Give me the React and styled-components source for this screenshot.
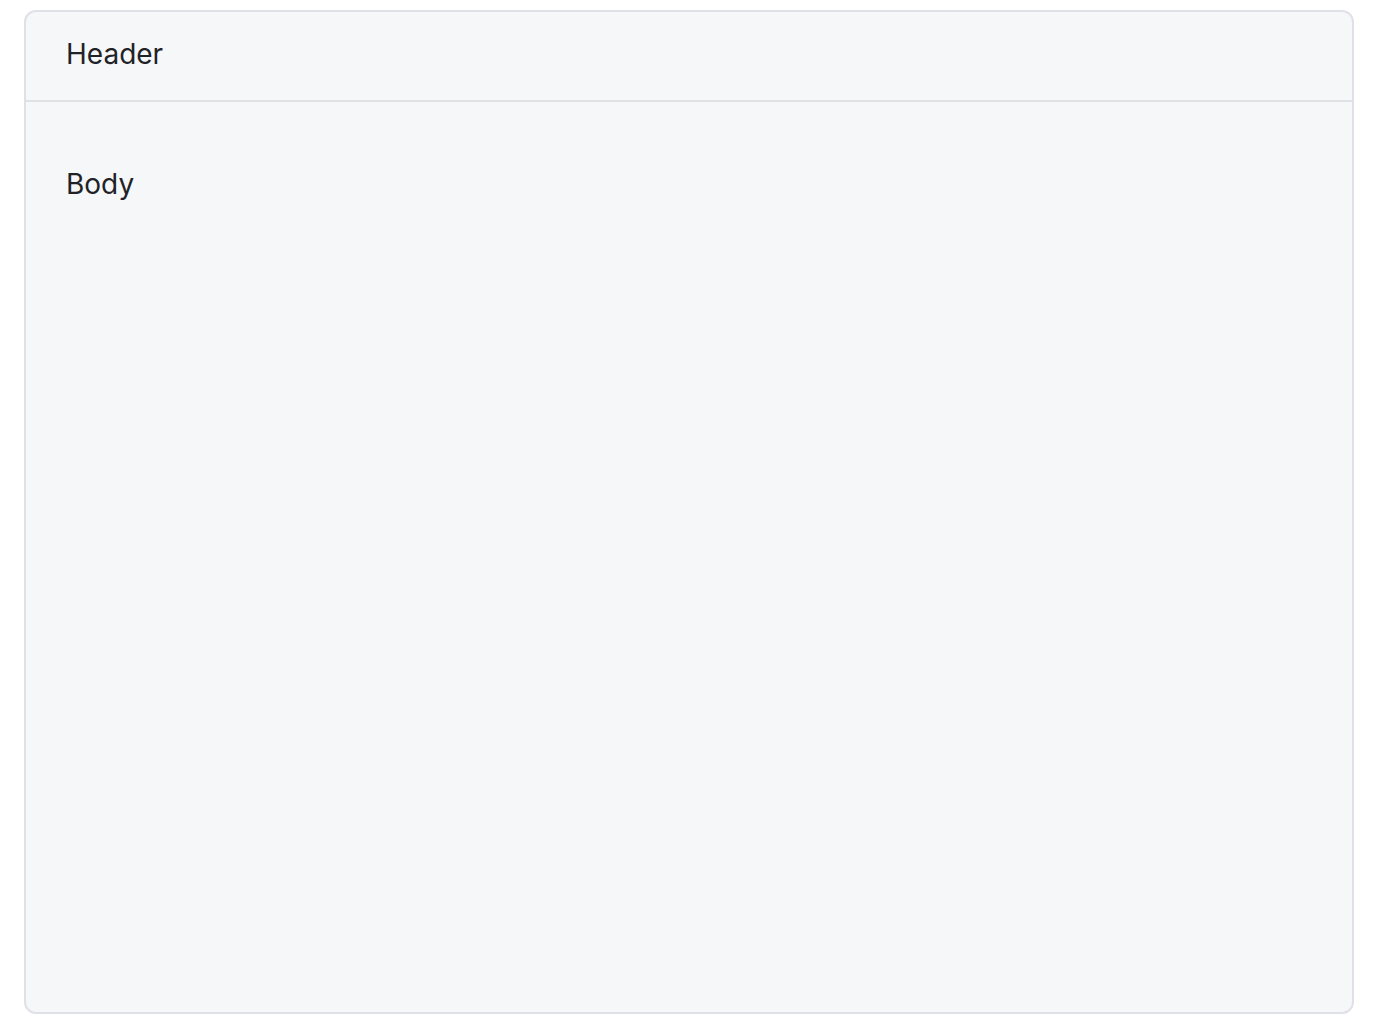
import styled, { createGlobalStyle } from "styled-components";

const GlobalStyle = createGlobalStyle`
    html,
    body {
        margin: 0;
        padding: 0;
        background: #ffffff;
    }

    body {
        font-family: Inter, "Noto Sans", "Liberation Sans", sans-serif;
        color: #1f2328;
        -webkit-font-smoothing: antialiased;
    }
`;

// 페이지 전체
const Page = styled.div`
    box-sizing: border-box;
    width: 100vw;
    padding: 10px 28px 16px 24px;
`;

// 카드 틀
const Card = styled.section`
    box-sizing: border-box;
    height: 1004px;
    display: flex;
    flex-direction: column;

    background-color: #f6f7f9;
    border: 2px solid #dfe1e6;
    border-radius: 12px;
    overflow: hidden;
`;

// 카드 헤더
const CardHeader = styled.header`
    padding: 21px 40px 25px;
    border-bottom: 2px solid #dfe1e6;
    font-size: 28px;
    line-height: 42px;
`;

// 카드 본문
const CardBody = styled.div`
    flex: 1;
    padding: 61px 40px;
    font-size: 28px;
    line-height: 42px;
`;

const App = () => {
    return (
        <>
            <GlobalStyle />
            <Page>
                <Card>
                    <CardHeader>Header</CardHeader>
                    <CardBody>Body</CardBody>
                </Card>
            </Page>
        </>
    );
};

export default App;
